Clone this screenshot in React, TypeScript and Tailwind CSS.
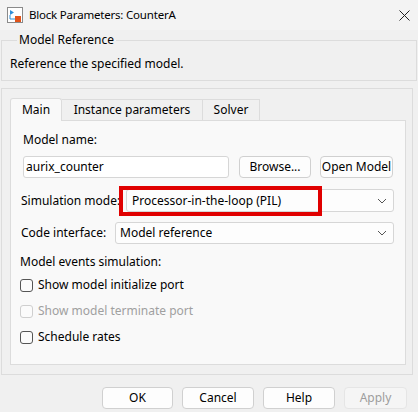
import { ReactNode } from "react";

function Chevron() {
  return (
    <svg width="10" height="6" viewBox="0 0 10 6" className="shrink-0">
      <path d="M1 1 L5 5 L9 1" fill="none" stroke="#555" strokeWidth="1" />
    </svg>
  );
}

function Btn({
  children,
  w,
  disabled,
}: {
  children: ReactNode;
  w: string;
  disabled?: boolean;
}) {
  return (
    <div
      className={
        "flex h-[22px] items-center justify-center rounded-[4px] border " +
        w +
        (disabled
          ? " border-[#e5e5e5] bg-[#f5f5f5] text-[#9d9d9d]"
          : " border-[#d0d0d0] bg-[#fdfdfd] text-black")
      }
    >
      {children}
    </div>
  );
}

function Check({ label, disabled }: { label: string; disabled?: boolean }) {
  return (
    <div className="flex h-[16px] items-center">
      <div
        className={
          "h-[13px] w-[13px] rounded-[3px] border " +
          (disabled ? "border-[#cfcfcf] bg-[#fbfbfb]" : "border-[#555] bg-[#fbfbfb]")
        }
      />
      <span className={"ml-[5px] " + (disabled ? "text-[#a0a0a0]" : "")}>{label}</span>
    </div>
  );
}

export default function App() {
  return (
    <div className="h-[412px] w-[418px] overflow-hidden bg-[#f0f0f0] font-['Noto_Sans',sans-serif] text-[12px] leading-[16px] text-black">
      {/* title bar */}
      <div className="flex h-[30px] items-center bg-[#f3f3f3] pl-[7px] pr-[8px]">
        <svg width="16" height="16" viewBox="0 0 16 16" className="shrink-0">
          <rect x="0.5" y="0.5" width="15" height="15" fill="#fff" stroke="#8a8a8a" />
          <path d="M3 3 L3 8 L7 5.5 Z" fill="#2f8fd8" />
          <path d="M3 8 L3 12 L8 12" fill="none" stroke="#2f8fd8" strokeWidth="1" />
          <rect x="8" y="9" width="6" height="6" fill="#e2541b" />
        </svg>
        <span className="ml-[6px] text-[11.5px] tracking-[-0.2px]">Block Parameters: CounterA</span>
        <svg width="11" height="11" viewBox="0 0 11 11" className="ml-auto">
          <path d="M0.5 0.5 L10.5 10.5 M10.5 0.5 L0.5 10.5" stroke="#222" strokeWidth="1" />
        </svg>
      </div>

      {/* group box */}
      <fieldset className="mx-[1px] mt-[2px] h-[49px] border border-[#dcdcdc] px-[8px] pt-[8px]">
        <legend className="ml-[7px] px-[2px] leading-[16px]">Model Reference</legend>
        <div>Reference the specified model.</div>
      </fieldset>

      {/* outer panel */}
      <div className="ml-[1px] mt-[7px] h-[287px] w-[412px] border border-[#dcdcdc] pl-[8px] pt-[9px]">
        <div className="flex h-[22px] items-end">
          <div className="relative z-10 -mb-px flex h-[23px] w-[52px] items-center justify-center rounded-t-[3px] border border-b-0 border-[#dcdcdc] bg-[#f9f9f9]">
            Main
          </div>
          <div className="flex h-[21px] w-[141px] items-center justify-center border border-b-0 border-l-0 border-[#dcdcdc] bg-[#f0f0f0]">
            Instance parameters
          </div>
          <div className="flex h-[21px] w-[57px] items-center justify-center border border-b-0 border-l-0 border-[#dcdcdc] bg-[#f0f0f0]">
            Solver
          </div>
        </div>

        <div className="h-[245px] w-[396px] border border-[#dcdcdc] bg-[#f9f9f9] pl-[9px] pr-[11px] pt-[11px]">
          <div className="pl-[3px]">Model name:</div>
          <div className="mt-[8px] flex items-center pl-[3px]">
            <div className="flex h-[22px] w-[206px] items-center rounded-[3px] border border-[#d6d6d6] bg-white pl-[2px]">
              aurix_counter
            </div>
            <div className="ml-[10px]">
              <Btn w="w-[72px]">Browse...</Btn>
            </div>
            <div className="ml-[9px]">
              <Btn w="w-[73px]">Open Model</Btn>
            </div>
          </div>

          <div className="mt-[11px] flex h-[23px] items-center">
            <span className="w-[106px] shrink-0 pl-[1px]">Simulation mode:</span>
            <div className="relative flex h-[23px] flex-1 items-center rounded-[3px] border border-[#d6d6d6] bg-[#fdfdfd] pl-[5px] pr-[6px]">
              <span>Processor-in-the-loop (PIL)</span>
              <span className="ml-auto">
                <Chevron />
              </span>
              <div className="absolute -left-[8px] -top-[4px] h-[30px] w-[203px] border-[4px] border-[#e00000]" />
            </div>
          </div>

          <div className="mt-[10px] flex h-[22px] items-center">
            <span className="w-[95px] shrink-0 pl-[1px]">Code interface:</span>
            <div className="flex h-[22px] flex-1 items-center rounded-[3px] border border-[#d6d6d6] bg-[#fdfdfd] pl-[4px] pr-[6px]">
              <span>Model reference</span>
              <span className="ml-auto">
                <Chevron />
              </span>
            </div>
          </div>

          <div className="mt-[10px]">Model events simulation:</div>
          <div className="mt-[7px] flex flex-col gap-[10px]">
            <Check label="Show model initialize port" />
            <Check label="Show model terminate port" disabled />
            <Check label="Schedule rates" />
          </div>
        </div>
      </div>

      {/* buttons */}
      <div className="mt-[12px] flex justify-end gap-[9px] pr-[11px]">
        <Btn w="w-[71px]">OK</Btn>
        <Btn w="w-[72px]">Cancel</Btn>
        <Btn w="w-[72px]">Help</Btn>
        <Btn w="w-[63px]" disabled>
          Apply
        </Btn>
      </div>
    </div>
  );
}
